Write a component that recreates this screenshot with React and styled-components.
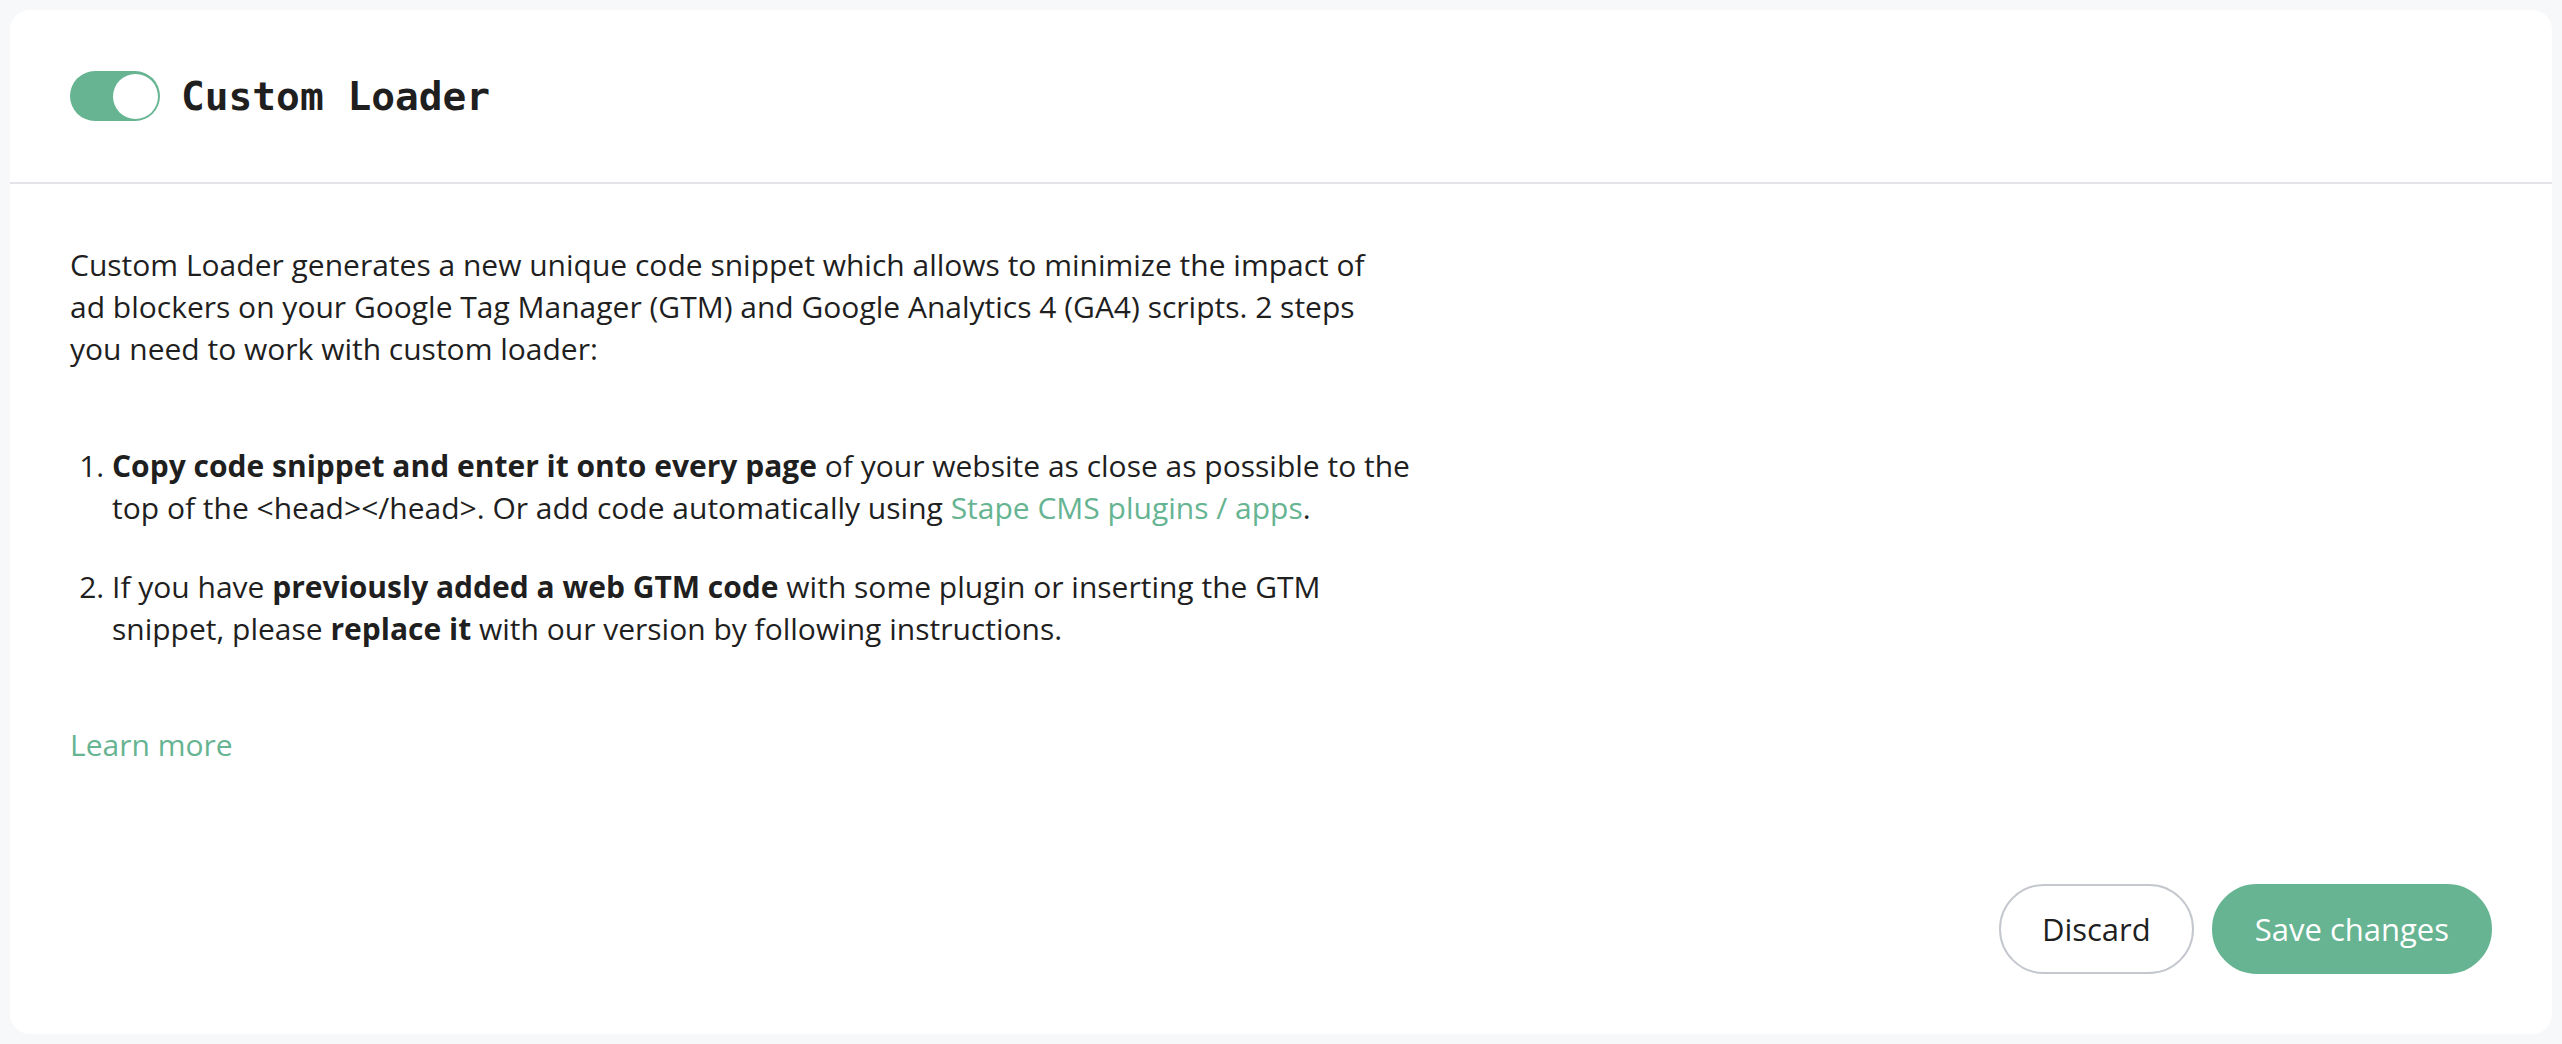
import React from 'react';
import styled, { createGlobalStyle } from 'styled-components';

const GlobalStyle = createGlobalStyle`
  html, body {
    margin: 0;
    padding: 0;
    background: #f7f8fa;
  }
  body {
    font-family: 'Open Sans', 'Noto Sans', Arial, sans-serif;
    color: #1f1f1f;
  }
`;

const Page = styled.div`
  box-sizing: border-box;
  height: 100vh;
  padding: 10px;
  display: flex;
`;

const Card = styled.div`
  flex: 1;
  display: flex;
  flex-direction: column;
  background: #fff;
  border-radius: 20px;
  overflow: hidden;
`;

const Header = styled.div`
  display: flex;
  align-items: center;
  gap: 21px;
  height: 172px;
  padding: 0 60px;
  border-bottom: 2px solid #e4e4e8;
`;

const Toggle = styled.button`
  display: flex;
  align-items: center;
  justify-content: ${(p) => (p.$on ? 'flex-end' : 'flex-start')};
  width: 90px;
  height: 50px;
  padding: 0 2px;
  border: none;
  border-radius: 25px;
  background: ${(p) => (p.$on ? '#66b492' : '#c9ccd1')};
  cursor: pointer;
`;

const Knob = styled.span`
  width: 45px;
  height: 45px;
  border-radius: 50%;
  background: #fff;
`;

const Title = styled.h1`
  margin: 0;
  font-family: 'DejaVu Sans Mono', 'Liberation Mono', monospace;
  font-size: 39.5px;
  font-weight: 700;
  color: #1f1f1f;
`;

const Body = styled.div`
  flex: 1;
  display: flex;
  flex-direction: column;
  padding: 60px;
  font-size: 30px;
  line-height: 42px;
`;

const Text = styled.div`
  max-width: 1360px;
`;

const Paragraph = styled.p`
  max-width: 1320px;
  margin: 0 0 75px;
`;

const Steps = styled.ol`
  margin: 0 0 74px;
  padding-left: 42px;
`;

const Step = styled.li`
  & + & {
    margin-top: 37px;
  }
`;

const Link = styled.a`
  color: #66b492;
  text-decoration: none;
`;

const Footer = styled.div`
  margin-top: auto;
  display: flex;
  justify-content: flex-end;
  gap: 18px;
`;

const Button = styled.button`
  height: 90px;
  padding: 0 41px;
  border-radius: 45px;
  font-family: 'Open Sans', 'Noto Sans', Arial, sans-serif;
  font-size: 31px;
  font-weight: 500;
  cursor: pointer;
  border: 2px solid ${(p) => (p.$primary ? '#66b492' : '#c4c8ce')};
  background: ${(p) => (p.$primary ? '#66b492' : '#fff')};
  color: ${(p) => (p.$primary ? '#fff' : '#1f1f1f')};
`;

export default function App() {
  return (
    <>
      <GlobalStyle />
      <Page>
        <Card>
          <Header>
            <Toggle $on aria-label="Enable custom loader">
              <Knob />
            </Toggle>
            <Title>Custom Loader</Title>
          </Header>
          <Body>
            <Text>
              <Paragraph>
                Custom Loader generates a new unique code snippet which allows to minimize the
                impact of ad blockers on your Google Tag Manager (GTM) and Google Analytics 4
                (GA4) scripts. 2 steps you need to work with custom loader:
              </Paragraph>
              <Steps>
                <Step>
                  <b>Copy code snippet and enter it onto every page</b> of your website as close
                  as possible to the top of the &lt;head&gt;&lt;/head&gt;. Or add code
                  automatically using <Link href="#">Stape CMS plugins / apps</Link>.
                </Step>
                <Step>
                  If you have <b>previously added a web GTM code</b> with some plugin or inserting
                  the GTM snippet, please <b>replace it</b> with our version by following
                  instructions.
                </Step>
              </Steps>
              <Link href="#">Learn more</Link>
            </Text>
            <Footer>
              <Button>Discard</Button>
              <Button $primary>Save changes</Button>
            </Footer>
          </Body>
        </Card>
      </Page>
    </>
  );
}
